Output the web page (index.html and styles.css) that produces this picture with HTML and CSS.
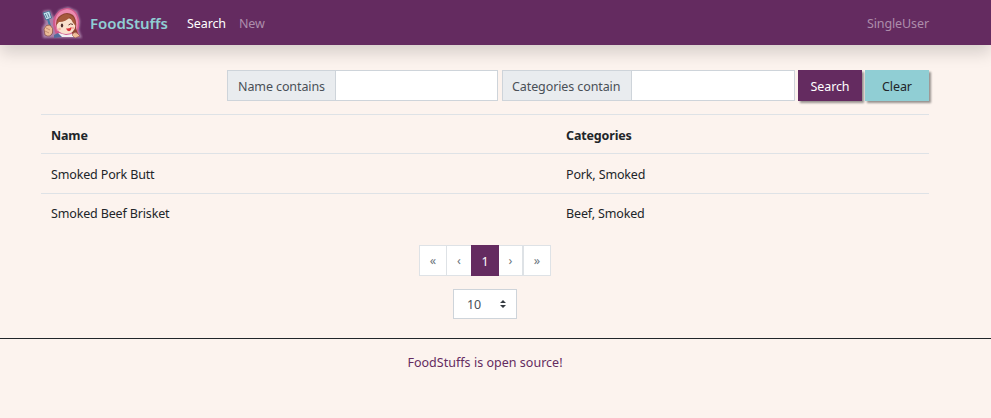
FILE: index.html
```html
<!DOCTYPE html>
<html lang="en">
<head>
<meta charset="utf-8">
<title>FoodStuffs</title>
<link rel="stylesheet" href="styles.css">
</head>
<body>
<header class="navbar">
  <div class="container nav-inner">
    <svg class="logo" viewBox="0 0 42 34" width="42" height="34" aria-hidden="true">
      <defs><filter id="glow" x="-20%" y="-20%" width="140%" height="140%"><feGaussianBlur stdDeviation="1.2"/></filter></defs>
      <path d="M2 5L9 4L13 12L18 4L27 1L36 5L39 15L38 24L41 32L2 32L1 22L4 17Z" fill="#c3a0c2" opacity=".75" filter="url(#glow)"/>
      <path d="M13 23Q10 14 15 8Q20 1 28 2Q36 4 38 13Q39 20 37 25L39 31L31 31L15 29Z" fill="#cf5a8d"/>
      <path d="M14 18Q14 5 26 3Q36 4 37 17L36 24L32 28L16 25Z" fill="#ec8bb0"/>
      <path d="M16 22Q13 13 20 9Q26 5 32 9Q36 13 35 22L37 28L32 29L30 25Z" fill="#8e4431"/>
      <ellipse cx="25" cy="20" rx="9.3" ry="8" fill="#fae0cc"/>
      <path d="M15.5 19Q16 12 22 9Q27 6 32 11Q35 16 34.5 20Q31 16 29 11Q25 16 18 16Z" fill="#a65a3c"/>
      <ellipse cx="21" cy="19.5" rx="1.2" ry="2" fill="#51302f"/>
      <path d="M27.5 19Q29.5 16.8 32 18.5" stroke="#65372d" fill="none"/>
      <circle cx="18.5" cy="23" r="1.3" fill="#f2b3a5"/>
      <circle cx="32" cy="22" r="1.2" fill="#f2b3a5"/>
      <path d="M25 22.5Q28 23 30.5 21Q30.5 25 28 25.2Q26 25 25 22.5" fill="#d92c36"/>
      <path d="M13 31L18 27L25 29L31 28L36 31Z" fill="#f3eef2"/>
      <path d="M13 29L17 27L21 31L13 32Z" fill="#526c9c"/>
      <path d="M7 13L9 20" stroke="#3f7ba5" stroke-width="2"/>
      <path d="M2 7L8.5 5L10.5 12L5 14Z" fill="#c2e0eb" stroke="#356789" stroke-width=".8"/>
      <path d="M4.3 8L6 12M6.5 7.3L8.2 11.5" stroke="#416a87" stroke-width=".8"/>
      <path d="M3 23Q5 18 9 19Q13 22 11.5 27Q9 32 4 29Z" fill="#edbd98" stroke="#7c4542" stroke-width=".7"/>
      <path d="M5 22L9 24M4 25L8 27" stroke="#a96d56" stroke-width=".6"/>
      <path d="M31 29Q33 25 36 27L39 30L34 32Z" fill="#efbd98" stroke="#7c4542" stroke-width=".5"/>
    </svg>
    <span class="brand">FoodStuffs</span>
    <nav class="links"><a class="active">Search</a><a>New</a></nav>
    <span class="user">SingleUser</span>
  </div>
</header>
<main class="container">
  <form class="filters">
    <div class="group group-name"><label for="name">Name contains</label><input id="name"></div>
    <div class="group group-category"><label for="category">Categories contain</label><input id="category"></div>
    <button type="button" class="btn primary">Search</button>
    <button type="button" class="btn secondary">Clear</button>
  </form>
  <table>
    <thead><tr><th>Name</th><th>Categories</th></tr></thead>
    <tbody>
      <tr><td>Smoked Pork Butt</td><td>Pork, Smoked</td></tr>
      <tr><td>Smoked Beef Brisket</td><td>Beef, Smoked</td></tr>
    </tbody>
  </table>
  <div class="pages"><span>«</span><span>‹</span><span class="current">1</span><span>›</span><span>»</span></div>
  <div class="page-size"><span>10</span><svg width="6" height="8" viewBox="0 0 6 8"><path d="M0 3L3 0L6 3ZM0 5H6L3 8Z" fill="#343a40"/></svg></div>
</main>
<footer><div class="container"><a>FoodStuffs is open source!</a></div></footer>
</body>
</html>
```
FILE: styles.css
```css
* { box-sizing: border-box; }
body { margin: 0; height: 418px; overflow: hidden; background: #fcf3ee; color: #212529; font: 12.5px/20px "Noto Sans", "Open Sans", sans-serif; letter-spacing: -.1px; }
.container { width: 888px; margin-left: 41px; }
.navbar { height: 45px; background: #642b60; box-shadow: 0 8px 16px rgba(0,0,0,.15); }
.nav-inner { height: 45px; display: flex; align-items: center; }
.logo { flex: none; margin-top: 1px; }
.brand { flex: none; width: 104px; padding-left: 7px; color: #90ced4; font-size: 15px; font-weight: 600; letter-spacing: -.05px; margin-top: 1px; }
.links { display: flex; gap: 13px; margin-top: 2px; }
.links a, .user { color: #ad8dab; }
.links .active { color: #fff; }
.user { margin: 2px 0 0 auto; }
.filters { display: flex; height: 31px; margin-top: 25px; padding-left: 186px; }
.group { display: flex; border: 1px solid #ced4da; background: #fff; }
.group-name { width: 271px; margin-right: 4px; }
.group-category { width: 293px; margin-right: 3px; }
.group label { width: 108px; flex: none; padding: 6px 0 0 10px; line-height: 20px; color: #495057; background: #e9ecef; border-right: 1px solid #ced4da; }
.group-category label { width: 129px; padding-left: 9px; }
.group input { width: 0; flex: 1; border: 0; padding: 0; background: #fff; outline: 0; }
.btn { border: 0; border-radius: 0; height: 31px; width: 64px; padding: 2px 0 0; font: inherit; letter-spacing: inherit; color: #fff; background: #642b60; box-shadow: 2px 2px 2px rgba(0,0,0,.4); }
.secondary { margin-left: 3px; background: #90ced4; color: #212529; }
table { width: 888px; margin-top: 13px; border-collapse: separate; border-spacing: 0; table-layout: fixed; }
th, td { height: 40px; padding: 2px 10px 0; border-top: 1px solid #dee2e6; text-align: left; vertical-align: middle; letter-spacing: -.15px; }
th { height: 39px; padding-top: 3px; font-weight: 700; }
th:first-child { width: 515px; }
tbody tr:last-child td { height: 39px; }
.pages { display: flex; width: 132px; height: 31px; margin: 13px 0 0 378px; }
.pages span { width: 28px; border: 1px solid #dee2e6; background: #fff; color: #6c757d; text-align: center; padding-top: 5px; }
.pages span:nth-child(2) { width: 24px; border-left: 0; border-right: 0; }
.pages span:nth-child(4) { width: 24px; border-left: 0; }
.pages .current { border-color: #642b60; background: #642b60; color: #fff; padding-top: 6px; }
.page-size { display: flex; width: 64px; height: 30px; margin: 13px 0 0 412px; padding: 1px 10px 0 13px; border: 1px solid #ced4da; background: #fff; color: #495057; align-items: center; justify-content: space-between; }
.page-size svg { margin-top: -1px; }
footer { margin-top: 19px; border-top: 1px solid #212529; padding-top: 14px; text-align: center; }
footer a { color: #642b60; letter-spacing: .02px; }
```
